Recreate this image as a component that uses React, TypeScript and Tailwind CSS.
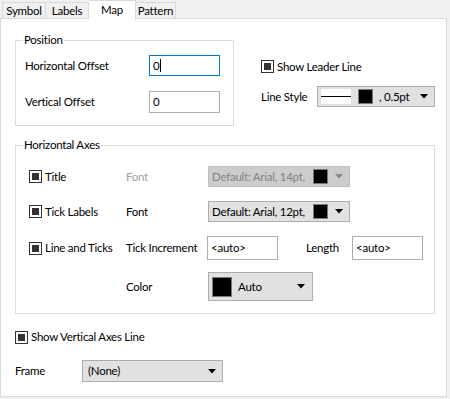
import React from 'react';

const font = { fontFamily: 'Lato, "Noto Sans", sans-serif' };

function Check({ label }: { label: string }) {
  return (
    <div className="flex items-center gap-[3px]">
      <span className="w-[13px] h-[13px] border border-[#333333] bg-white flex items-center justify-center shrink-0">
        <span className="w-[7px] h-[7px] bg-[#333333]" />
      </span>
      <span>{label}</span>
    </div>
  );
}

function Arrow({ disabled }: { disabled?: boolean }) {
  return (
    <svg width="8" height="5" viewBox="0 0 8 5" className="shrink-0">
      <path d="M0 0 H8 L4 4.5 Z" fill={disabled ? '#8a8a8a' : '#000'} />
    </svg>
  );
}

function Swatch({ size = 15 }: { size?: number }) {
  return size === 20 ? (
    <span className="w-[20px] h-[20px] bg-black border border-[#7a7a7a] shrink-0" />
  ) : (
    <span className="w-[15px] h-[15px] bg-black border border-[#7a7a7a] shrink-0" />
  );
}

function Group({ title, className, children }: { title: string; className: string; children: React.ReactNode }) {
  return (
    <div className={`relative border border-[#dcdcdc] ${className}`}>
      <span className="absolute left-[7px] -top-[9px] bg-white px-px leading-[16px]">{title}</span>
      {children}
    </div>
  );
}

export default function App() {
  return (
    <div className="w-[450px] h-[399px] bg-[#f0f0f0] text-[11.5px] tracking-[-0.25px] text-black leading-none whitespace-nowrap" style={font}>
      {/* tabs */}
      <div className="flex items-end h-[19px] pl-[2px] relative z-10">
        <div className="w-[44px] h-[17px] shrink-0 border border-[#d9d9d9] border-b-0 flex items-center justify-center">Symbol</div>
        <div className="w-[43px] h-[17px] shrink-0 border border-[#d9d9d9] border-b-0 border-l-0 flex items-center justify-center">Labels</div>
        <div className="w-[47px] h-[20px] shrink-0 bg-white border border-[#d9d9d9] border-b-0 border-l-0 -mb-px flex items-start justify-center pt-[3px]">Map</div>
        <div className="w-[40px] h-[17px] shrink-0 border border-[#d9d9d9] border-b-0 border-l-0 flex items-center justify-center">Pattern</div>
      </div>

      {/* panel */}
      <div className="w-[447px] h-[379px] -mt-px bg-white border border-[#d9d9d9] pl-[14px]">
        <div className="flex mt-[21px]">
          <Group title="Position" className="w-[219px] h-[86px] shrink-0">
            <div className="pl-[9px] pt-[14px]">
              <div className="flex items-center h-[21px]">
                <span className="w-[124px]">Horizontal Offset</span>
                <div className="w-[71px] h-[21px] border border-[#0078d7] flex items-center pl-[3px]">
                  0<span className="w-px h-[13px] bg-black ml-px" />
                </div>
              </div>
              <div className="flex items-center h-[22px] mt-[15px]">
                <span className="w-[124px]">Vertical Offset</span>
                <div className="w-[71px] h-[22px] border border-[#adadad] flex items-center pl-[3px]">0</div>
              </div>
            </div>
          </Group>

          <div className="ml-[27px]">
            <div className="h-[21px] mt-[16px] flex items-center">
              <Check label="Show Leader Line" />
            </div>
            <div className="flex items-center mt-[9px]">
              <span className="w-[56px]">Line Style</span>
              <div className="w-[118px] h-[21px] bg-[#e1e1e1] border border-[#adadad] flex items-center pl-[3px] pr-[6px]">
                <span className="w-[30px] h-[15px] bg-white flex items-center">
                  <span className="w-full h-px bg-black" />
                </span>
                <span className="ml-[7px] flex"><Swatch /></span>
                <span className="ml-[6px]">, 0.5pt</span>
                <span className="ml-auto flex"><Arrow /></span>
              </div>
            </div>
          </div>
        </div>

        <Group title="Horizontal Axes" className="w-[420px] h-[169px] mt-[19px]">
          <div className="pl-[13px] pt-[20px]">
            <div className="flex items-center h-[21px]">
              <span className="w-[97px]"><Check label="Title" /></span>
              <span className="w-[82px] text-[#a0a0a0]">Font</span>
              <div className="w-[142px] h-[21px] bg-[#cccccc] border border-[#bfbfbf] flex items-center pl-[3px] pr-[6px] text-[#838383]">
                <span>Default: Arial, 14pt,</span>
                <span className="ml-auto flex"><Swatch /></span>
                <span className="ml-[7px] flex"><Arrow disabled /></span>
              </div>
            </div>
            <div className="flex items-center h-[21px] mt-[14px]">
              <span className="w-[97px]"><Check label="Tick Labels" /></span>
              <span className="w-[82px]">Font</span>
              <div className="w-[142px] h-[21px] bg-[#e1e1e1] border border-[#adadad] flex items-center pl-[3px] pr-[6px]">
                <span>Default: Arial, 12pt,</span>
                <span className="ml-auto flex"><Swatch /></span>
                <span className="ml-[7px] flex"><Arrow /></span>
              </div>
            </div>
            <div className="flex items-center h-[24px] mt-[14px]">
              <span className="w-[97px]"><Check label="Line and Ticks" /></span>
              <span className="w-[81px]">Tick Increment</span>
              <div className="w-[71px] h-[24px] border border-[#adadad] flex items-center pl-[3px]">&lt;auto&gt;</div>
              <span className="w-[74px] pl-[28px]">Length</span>
              <div className="w-[71px] h-[24px] border border-[#adadad] flex items-center pl-[3px]">&lt;auto&gt;</div>
            </div>
            <div className="flex items-center h-[29px] mt-[12px]">
              <span className="w-[97px]" />
              <span className="w-[82px]">Color</span>
              <div className="w-[105px] h-[29px] bg-[#e1e1e1] border border-[#adadad] flex items-center pl-[3px] pr-[7px]">
                <Swatch size={20} />
                <span className="ml-[6px]">Auto</span>
                <span className="ml-auto flex"><Arrow /></span>
              </div>
            </div>
          </div>
        </Group>

        <div className="h-[16px] mt-[15px] flex items-center">
          <Check label="Show Vertical Axes Line" />
        </div>
        <div className="flex items-center mt-[15px]">
          <span className="w-[67px]">Frame</span>
          <div className="w-[141px] h-[22px] bg-[#e1e1e1] border border-[#adadad] flex items-center pl-[5px] pr-[6px]">
            <span>(None)</span>
            <span className="ml-auto flex"><Arrow /></span>
          </div>
        </div>
      </div>
    </div>
  );
}
